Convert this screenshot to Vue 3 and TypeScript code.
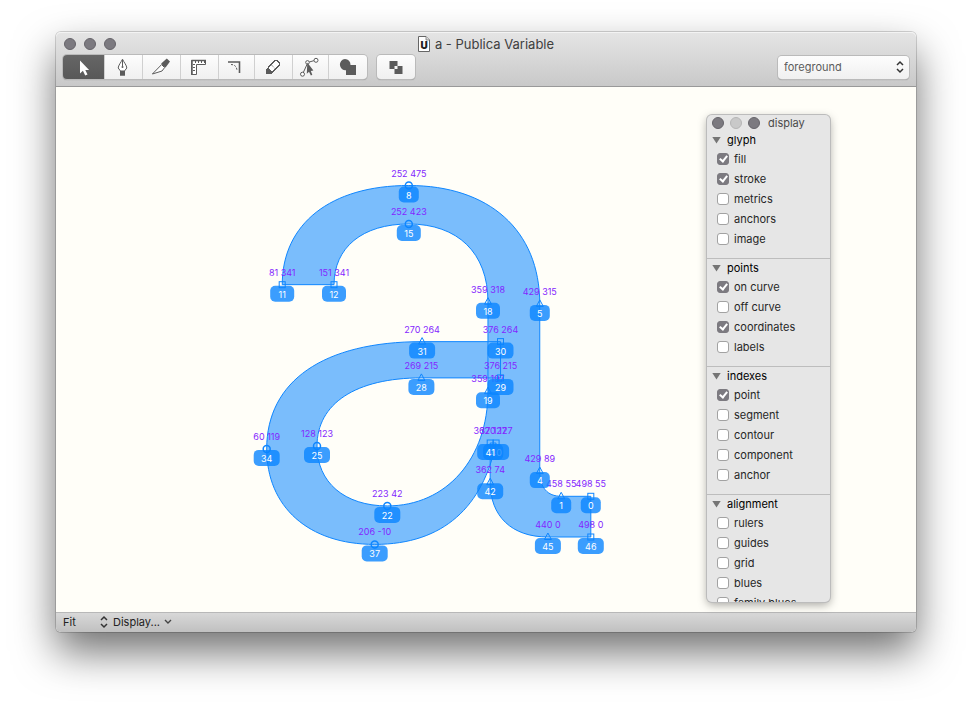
<script setup lang="ts">
import { computed, reactive, ref } from 'vue'

type Kind = 'smooth' | 'tangent' | 'corner'
type Pt = { id: number; x: number; y: number; kind: Kind }
type Item = { name: string; on: boolean }
type Section = { name: string; open: boolean; items: Item[] }

const points: Pt[] = [
  { id: 0, x: 498, y: 55, kind: 'corner' },
  { id: 1, x: 458, y: 55, kind: 'tangent' },
  { id: 4, x: 429, y: 89, kind: 'tangent' },
  { id: 5, x: 429, y: 315, kind: 'tangent' },
  { id: 8, x: 252, y: 475, kind: 'smooth' },
  { id: 11, x: 81, y: 341, kind: 'corner' },
  { id: 12, x: 151, y: 341, kind: 'corner' },
  { id: 15, x: 252, y: 423, kind: 'smooth' },
  { id: 18, x: 359, y: 318, kind: 'tangent' },
  { id: 19, x: 359, y: 197, kind: 'tangent' },
  { id: 22, x: 223, y: 42, kind: 'smooth' },
  { id: 25, x: 128, y: 123, kind: 'smooth' },
  { id: 28, x: 269, y: 215, kind: 'tangent' },
  { id: 29, x: 376, y: 215, kind: 'corner' },
  { id: 30, x: 376, y: 264, kind: 'corner' },
  { id: 31, x: 270, y: 264, kind: 'tangent' },
  { id: 34, x: 60, y: 119, kind: 'smooth' },
  { id: 37, x: 206, y: -10, kind: 'smooth' },
  { id: 40, x: 370, y: 127, kind: 'corner' },
  { id: 41, x: 362, y: 127, kind: 'corner' },
  { id: 42, x: 362, y: 74, kind: 'tangent' },
  { id: 45, x: 440, y: 0, kind: 'tangent' },
  { id: 46, x: 498, y: 0, kind: 'corner' },
]

const outline =
  'M498 55 L458 55 C439 55 429 67 429 89 L429 315 C429 415 360 475 252 475 ' +
  'C146 475 81 423 81 341 L151 341 C151 391 189 423 252 423 C318 423 359 384 359 318 ' +
  'L359 197 C359 106 303 42 223 42 C165 42 128 74 128 123 C128 180 180 215 269 215 ' +
  'L376 215 L376 264 L270 264 C137 264 60 211 60 119 C60 41 116 -10 206 -10 ' +
  'C300 -10 352 42 370 127 L362 127 L362 74 C362 28 391 0 440 0 L498 0 Z'

const scale = 0.74
const px = (x: number) => Math.round((166.3 + x * scale) * 10) / 10
const py = (y: number) => Math.round((450 - y * scale) * 10) / 10
const badge = (id: number) => (id < 10 ? 20 : id < 20 ? 24 : 26)

const sections = reactive<Section[]>([
  { name: 'glyph', open: true, items: [
    { name: 'fill', on: true }, { name: 'stroke', on: true }, { name: 'metrics', on: false },
    { name: 'anchors', on: false }, { name: 'image', on: false }] },
  { name: 'points', open: true, items: [
    { name: 'on curve', on: true }, { name: 'off curve', on: false },
    { name: 'coordinates', on: true }, { name: 'labels', on: false }] },
  { name: 'indexes', open: true, items: [
    { name: 'point', on: true }, { name: 'segment', on: false }, { name: 'contour', on: false },
    { name: 'component', on: false }, { name: 'anchor', on: false }] },
  { name: 'alignment', open: true, items: [
    { name: 'rulers', on: false }, { name: 'guides', on: false }, { name: 'grid', on: false },
    { name: 'blues', on: false }, { name: 'family blues', on: false }] },
])

const isOn = (section: number, item: number) => sections[section].items[item].on
const showFill = computed(() => isOn(0, 0))
const showStroke = computed(() => isOn(0, 1))
const showMarks = computed(() => isOn(1, 0))
const showCoords = computed(() => isOn(1, 2))
const showIndexes = computed(() => isOn(2, 0))

const tools = ['select', 'pen', 'slice', 'measure', 'corner', 'pixel', 'path', 'shape']
const active = ref('select')
const layer = ref('foreground')
const zoom = ref('Fit')
</script>

<template>
  <div class="desktop">
    <main class="window">
      <header class="head">
        <div class="titlebar">
          <div class="lights">
            <button class="light" aria-label="Close"></button>
            <button class="light" aria-label="Minimize"></button>
            <button class="light" aria-label="Zoom"></button>
          </div>
          <h1 class="title">
            <svg class="doc" viewBox="0 0 12 16" aria-hidden="true">
              <path d="M.5 .5H8L11.5 4V15.5H.5Z" fill="#fff" stroke="#666" />
              <path d="M8 .5V4H11.5" fill="#ddd" stroke="#777" stroke-width=".8" />
              <text x="6" y="12.5" text-anchor="middle">U</text>
            </svg>
            a - Publica Variable
          </h1>
        </div>
        <div class="toolbar">
          <div class="segments">
            <button
              v-for="t in tools"
              :key="t"
              class="tool"
              :class="[t, { active: active === t }]"
              :aria-label="t"
              @click="active = t"
            >
              <svg viewBox="0 0 24 24" aria-hidden="true">
                <path v-if="t === 'select'" fill="currentColor" d="M8 5.5V18.4L10.9 15.8L13.2 20.6L15.5 19.6L13.3 14.9H17.1Z" />
                <g v-else-if="t === 'pen'">
                  <path d="M11.5 4.2C10.3 7 7.2 10.4 7.2 13L9.5 16H13.5L15.8 13C15.8 10.4 12.7 7 11.5 4.2Z" fill="#fff" stroke="currentColor" />
                  <path d="M11.5 5V11.5" stroke="currentColor" />
                  <circle cx="11.5" cy="12" r="1" fill="currentColor" />
                  <path d="M9 16H14V20.7H9Z" fill="currentColor" />
                </g>
                <g v-else-if="t === 'slice'">
                  <path d="M3.4 19L12.6 9.6L15.6 12.6L13 16Z" fill="#fff" stroke="currentColor" />
                  <path d="M12.2 8.6L17.8 3.6L21 6.4L16.6 12.4L14.6 11.6Z" fill="currentColor" />
                </g>
                <g v-else-if="t === 'measure'">
                  <path d="M4.5 5.5H18.5V9.5H9.5V19.5H4.5Z" fill="#fff" stroke="currentColor" />
                  <path d="M4.5 5.5H19M5 5V20" stroke="currentColor" stroke-width="1.5" />
                  <path d="M8.5 6V8M11.5 6V8M14.5 6V8M17.5 6V8M6 9.5H8M6 12.5H8M6 15.5H8" stroke="currentColor" />
                </g>
                <g v-else-if="t === 'corner'">
                  <path d="M4 7H15.5V18" stroke="currentColor" stroke-width="1.6" />
                  <path d="M7 9.5C11 9.5 13 12 13 16" stroke="currentColor" stroke-dasharray="2 1.4" />
                </g>
                <g v-else-if="t === 'pixel'">
                  <path
                    d="M7 13L14 5.5H16L18.5 8V10L11 17.5Z"
                    fill="#fff"
                    stroke="currentColor"
                    stroke-width="1.3"
                    shape-rendering="crispEdges"
                  />
                  <path d="M10.5 10L14 13.5" stroke="currentColor" stroke-dasharray="1 1" />
                  <path d="M5 19V14.5L7 12.5L11.5 17.5L10 19Z" fill="currentColor" shape-rendering="crispEdges" />
                </g>
                <g v-else-if="t === 'path'">
                  <path d="M5.3 17.5L9.3 8.8M11.3 7L16.8 5.4" stroke="currentColor" />
                  <circle cx="4.5" cy="19.2" r="2" fill="#fff" stroke="currentColor" />
                  <circle cx="9.5" cy="7.4" r="1.8" fill="#fff" stroke="currentColor" />
                  <circle cx="18" cy="5.3" r="2" fill="#fff" stroke="currentColor" />
                  <path fill="currentColor" d="M9.3 7.6L8.8 18.8L11 16.8L12.9 20.6L14.3 19.8L12.8 16L15.4 15.4Z" />
                </g>
                <path v-else fill="currentColor" d="M9 4A5.6 5.6 0 0 1 14.5 10H20V20H10V15.2A5.6 5.6 0 1 1 9 4Z" />
              </svg>
            </button>
          </div>
          <button class="tool boolean" aria-label="Exclude overlap">
            <svg viewBox="0 0 24 24" aria-hidden="true">
              <path fill="currentColor" fill-rule="evenodd" d="M5.5 6H13.5V14H5.5ZM10.5 11H18.5V19H10.5Z" />
            </svg>
          </button>
          <label class="picker layer">
            <select v-model="layer" aria-label="Layer">
              <option>foreground</option>
              <option>background</option>
            </select>
            <svg viewBox="0 0 10 14" aria-hidden="true"><path d="M2 5L5 2L8 5M2 9L5 12L8 9" /></svg>
          </label>
        </div>
      </header>

      <section class="canvas">
        <svg class="glyph" viewBox="0 0 860 525" role="img" aria-label="a">
          <g :transform="`translate(166.3 450) scale(${scale} -${scale})`">
            <path class="shape" :class="{ filled: showFill, stroked: showStroke }" :d="outline" />
          </g>
          <template v-if="showCoords">
            <text v-for="p in points" :key="p.id" class="coord" :x="px(p.x)" :y="py(p.y) - 9">{{ p.x }} {{ p.y }}</text>
          </template>
          <template v-if="showMarks">
            <g v-for="p in points" :key="p.id" class="mark" :transform="`translate(${px(p.x)} ${py(p.y)})`">
              <circle v-if="p.kind === 'smooth'" class="dot" r="3.5" />
              <path v-else-if="p.kind === 'tangent'" d="M0 -4L3.5 2.5H-3.5Z" />
              <rect v-else x="-3" y="-3" width="6" height="6" />
            </g>
          </template>
          <template v-if="showIndexes">
            <g v-for="p in points" :key="p.id" :transform="`translate(${px(p.x)} ${py(p.y)})`">
              <rect class="badge" :x="-badge(p.id) / 2" y="1" :width="badge(p.id)" height="16" rx="5" />
              <text class="index" y="13">{{ p.id }}</text>
            </g>
          </template>
        </svg>

        <aside class="panel">
          <div class="panel-title">
            <button class="light" aria-label="Close panel"></button>
            <button class="light off" aria-label="Minimize panel" disabled></button>
            <button class="light" aria-label="Zoom panel"></button>
            <h2>display</h2>
          </div>
          <section v-for="s in sections" :key="s.name" class="group">
            <button class="group-head" :aria-expanded="s.open" @click="s.open = !s.open">
              <span class="triangle" :class="{ closed: !s.open }"></span>{{ s.name }}
            </button>
            <template v-if="s.open">
              <label v-for="i in s.items" :key="i.name" class="row">
                <input v-model="i.on" type="checkbox" />{{ i.name }}
              </label>
            </template>
          </section>
        </aside>
      </section>

      <footer class="status">
        <label class="picker zoom">
          <select v-model="zoom" aria-label="Zoom">
            <option>Fit</option>
            <option>100%</option>
            <option>200%</option>
          </select>
          <svg viewBox="0 0 10 14" aria-hidden="true"><path d="M2 5L5 2L8 5M2 9L5 12L8 9" /></svg>
        </label>
        <button class="display">
          Display...
          <svg viewBox="0 0 8 6" aria-hidden="true"><path d="M1 1L4 4L7 1" /></svg>
        </button>
      </footer>
    </main>
  </div>
</template>

<style>
body {
  background: #fff;
}
</style>

<style scoped>
.desktop {
  box-sizing: border-box;
  display: flex;
  min-height: 100vh;
  padding: 32px 56px 80px;
  overflow: hidden;
  font-family: Inter, "Liberation Sans", sans-serif;
  font-size: 11px;
  color: #262626;
}
button,
select {
  margin: 0;
  padding: 0;
  border: 0;
  background: none;
  color: inherit;
  font: inherit;
}
h1,
h2 {
  margin: 0;
  font-weight: 400;
}
svg {
  display: block;
  fill: none;
}
.window {
  display: flex;
  flex: 1;
  flex-direction: column;
  min-width: 0;
  border-radius: 5px;
  box-shadow: 0 0 0 1px rgba(0, 0, 0, 0.16), 0 20px 42px rgba(0, 0, 0, 0.56);
}
.head {
  padding-bottom: 7px;
  border-bottom: 1px solid #999;
  border-radius: 5px 5px 0 0;
  background: linear-gradient(#e5e5e5, #c9c9c9);
  box-shadow: inset 0 1px #f3f3f3;
}
.titlebar {
  display: grid;
  grid-template-columns: 1fr auto 1fr;
  align-items: center;
  height: 23px;
  padding: 0 8px;
}
.lights {
  display: flex;
  gap: 8px;
}
.light {
  box-sizing: border-box;
  width: 12px;
  height: 12px;
  border: 1px solid #66646a;
  border-radius: 50%;
  background: #7c7a80;
}
.light.off {
  border-color: #b5b5b5;
  background: #c9c9c9;
}
.title {
  display: flex;
  align-items: center;
  gap: 5px;
  color: #404040;
  font-size: 13px;
  line-height: 16px;
}
.doc {
  width: 12px;
  height: 16px;
}
.doc text {
  fill: #222;
  font-size: 10px;
  font-weight: 900;
}
.toolbar {
  display: flex;
  align-items: center;
  gap: 10px;
  padding: 0 7px;
}
.segments {
  display: flex;
  overflow: hidden;
  border-radius: 4px;
  box-shadow: 0 0 0 1px #bababa, 0 1px 1px #888;
}
.tool {
  box-sizing: border-box;
  display: grid;
  place-items: center;
  width: 38px;
  height: 24px;
  background: linear-gradient(#fdfdfd, #f0f0f0);
  color: #5b5b5b;
}
.segments .tool + .tool {
  box-shadow: inset 1px 0 #d0d0d0;
}
.tool.select {
  width: 41px;
}
.tool.corner,
.tool.path {
  width: 36px;
}
.tool.shape {
  width: 39px;
}
.tool.active {
  background: linear-gradient(#666, #585858);
  color: #fff;
}
.tool svg {
  width: 24px;
  height: 24px;
}
.tool.boolean {
  border-radius: 4px;
  box-shadow: 0 0 0 1px #bababa, 0 1px 1px #888;
}
.picker {
  display: grid;
  align-items: center;
}
.picker select,
.picker svg {
  grid-area: 1 / 1;
}
.picker select {
  width: 100%;
  appearance: none;
  outline: none;
}
.picker svg {
  justify-self: end;
  width: 10px;
  height: 14px;
  stroke: #333;
  stroke-width: 1.5;
  pointer-events: none;
}
.layer {
  width: 131px;
  height: 23px;
  margin-left: auto;
  border-radius: 4px;
  background: linear-gradient(#fdfdfd, #f0f0f0);
  box-shadow: 0 0 0 1px #bababa, 0 1px 1px #888;
  color: #5c5c5c;
}
.layer select {
  height: 23px;
  padding-left: 6px;
}
.layer svg {
  margin-right: 4px;
}
.canvas {
  position: relative;
  flex: 1;
  min-height: 320px;
  background: #fffef8;
}
.glyph {
  position: absolute;
  inset: 0;
  width: 100%;
  height: 100%;
}
.shape.filled {
  fill: #7abdfc;
}
.shape.stroked {
  stroke: #0f86ff;
  stroke-width: 1px;
  vector-effect: non-scaling-stroke;
}
.mark {
  stroke: #0f86ff;
}
.mark .dot {
  stroke-width: 1.5px;
}
.badge {
  fill: rgba(10, 132, 255, 0.8);
}
.index,
.coord {
  font-size: 9px;
  text-anchor: middle;
}
.index {
  fill: #fff;
}
.coord {
  fill: #8426ff;
}
.panel {
  position: absolute;
  top: 28px;
  right: 86px;
  bottom: 10px;
  width: 123px;
  overflow: hidden;
  border-radius: 5px;
  background: #e6e6e6;
  box-shadow: 0 0 0 1px #bcbcbc, 0 3px 10px rgba(0, 0, 0, 0.35);
}
.panel-title {
  display: flex;
  align-items: center;
  gap: 6px;
  height: 16px;
  padding-left: 5px;
}
.panel-title h2 {
  margin-left: 2px;
  color: #4a4a4a;
  font-size: 11px;
}
.group {
  padding-bottom: 9px;
}
.group + .group {
  border-top: 1px solid #bdbdbd;
}
.group-head {
  display: flex;
  align-items: center;
  gap: 6px;
  width: 100%;
  height: 18px;
  padding-left: 5px;
  color: #000;
}
.triangle {
  width: 9px;
  height: 7px;
  background: #757575;
  clip-path: polygon(0 0, 100% 0, 50% 100%);
}
.triangle.closed {
  transform: rotate(-90deg);
}
.row {
  display: flex;
  align-items: center;
  gap: 5px;
  height: 20px;
  padding-left: 10px;
}
.row input {
  box-sizing: border-box;
  display: grid;
  place-items: center;
  width: 12px;
  height: 12px;
  margin: 0;
  appearance: none;
  border: 1px solid #a2a2a2;
  border-radius: 3px;
  background: #fff;
}
.row input:checked {
  border-color: #7c7a80;
  background: #7c7a80;
}
.row input:checked::after {
  width: 3px;
  height: 6px;
  margin-bottom: 2px;
  border: solid #fff;
  border-width: 0 2px 2px 0;
  content: "";
  transform: rotate(38deg);
}
.status {
  display: flex;
  align-items: center;
  gap: 4px;
  height: 18px;
  padding: 0 7px 1px;
  border-top: 1px solid #b8b8b8;
  border-radius: 0 0 5px 5px;
  background: linear-gradient(#d8d8d8, #c0c0c0);
  color: #222;
}
.zoom {
  width: 46px;
}
.display {
  display: flex;
  align-items: center;
  gap: 4px;
}
.display svg {
  width: 8px;
  height: 6px;
  stroke: #444;
  stroke-width: 1.4;
}
</style>
